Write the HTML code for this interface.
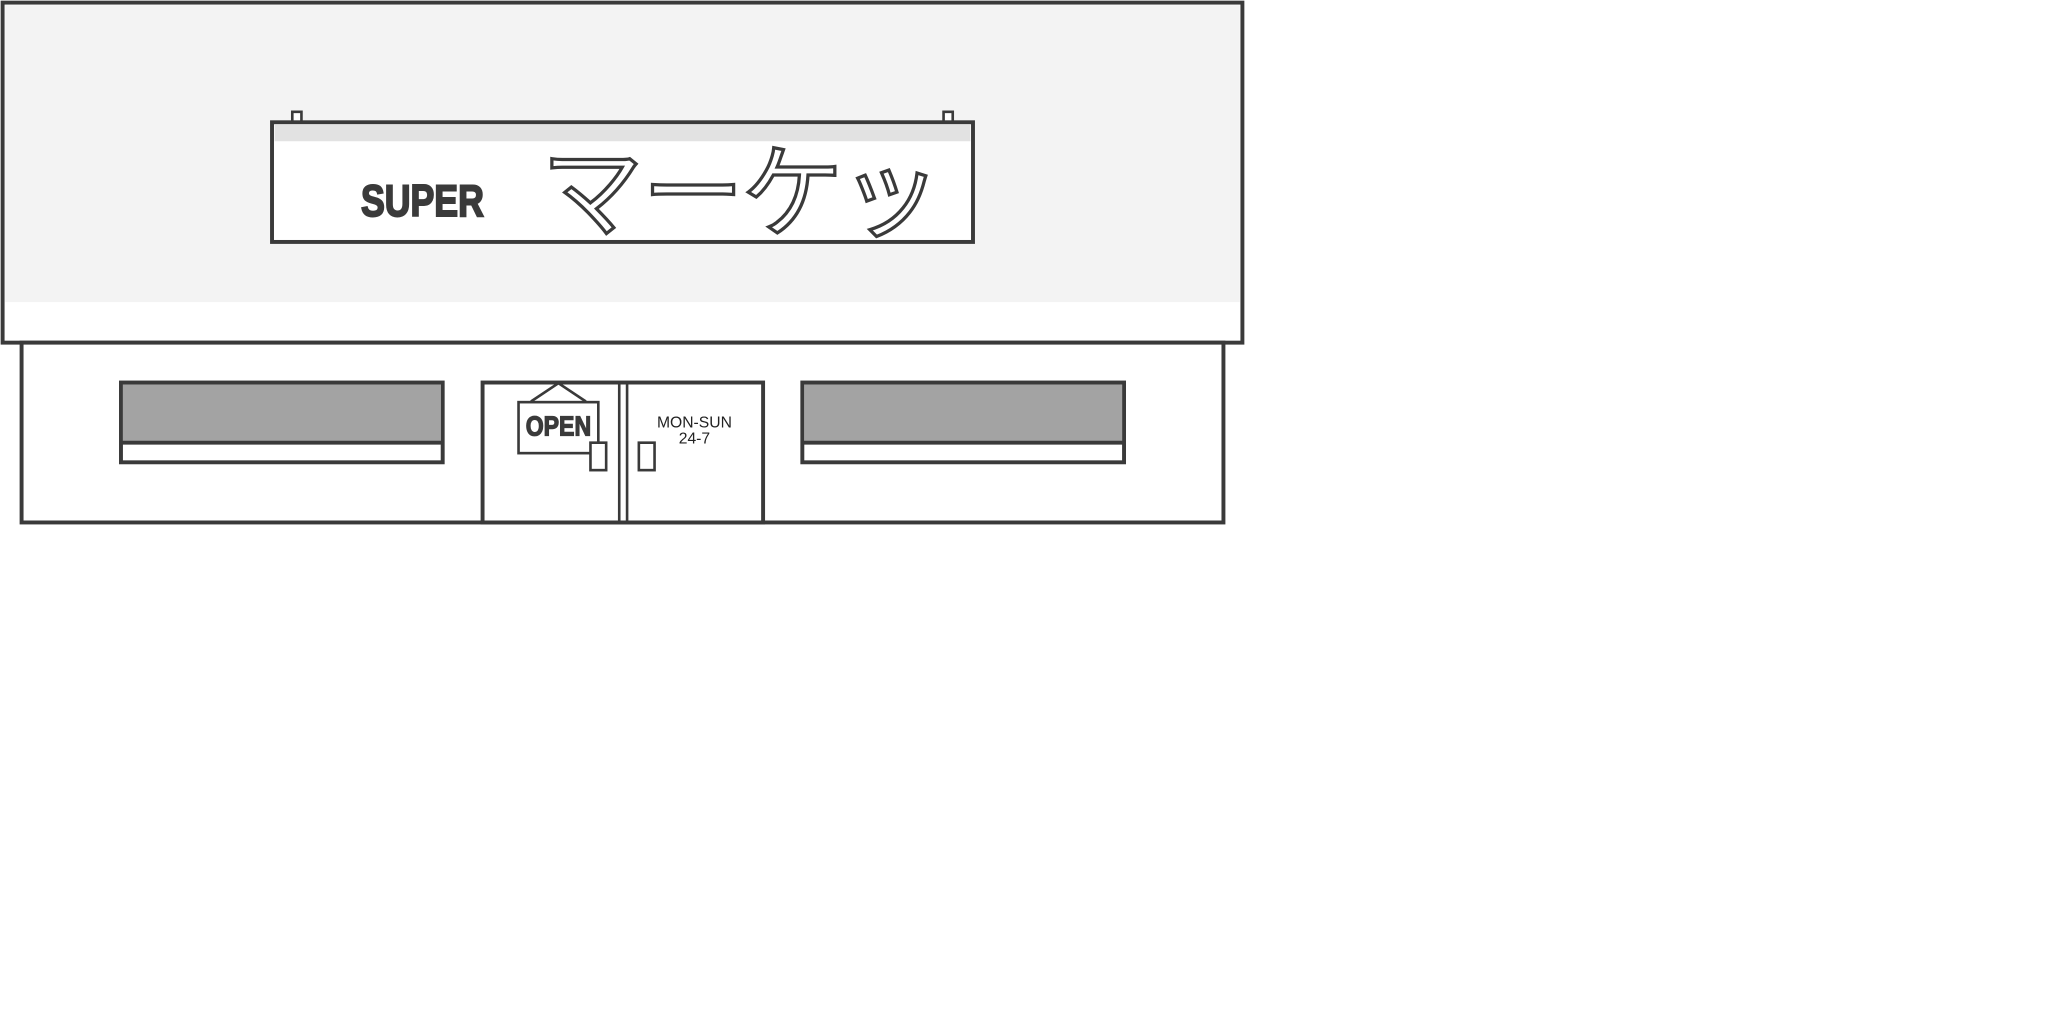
<!DOCTYPE html>
<html><head><meta charset="utf-8"><style>html,body{margin:0;padding:0;background:#fff}svg{display:block}</style></head>
<body>
<svg width="2048" height="1024" viewBox="0 0 1566 783" xmlns="http://www.w3.org/2000/svg">
<g stroke="#3a3a3a" stroke-width="3">
<rect x="2" y="2" width="948" height="260" fill="#fff"/>
<rect x="4" y="4" width="944" height="227" fill="#f3f3f3" stroke="none"/>
<rect x="223.5" y="85.5" width="7" height="8" fill="#fff" stroke-width="2"/>
<rect x="721.5" y="85.5" width="7" height="8" fill="#fff" stroke-width="2"/>
<rect x="208" y="93.5" width="536" height="91.5" fill="#fff"/>
<rect x="210" y="95" width="532" height="13" fill="#e2e2e2" stroke="none"/>
<rect x="16.5" y="262" width="919" height="137.5" fill="#fff"/>
<rect x="92.5" y="292.5" width="246" height="61" fill="#fff"/>
<rect x="94" y="294" width="243" height="44" fill="#a3a3a3" stroke="none"/>
<line x1="92.5" y1="338.5" x2="338.5" y2="338.5"/>
<rect x="613.5" y="292.5" width="246" height="61" fill="#fff"/>
<rect x="615" y="294" width="243" height="44" fill="#a3a3a3" stroke="none"/>
<line x1="613.5" y1="338.5" x2="859.5" y2="338.5"/>
<rect x="369" y="292.5" width="214.5" height="107" fill="#fff"/>
<line x1="473.5" y1="292" x2="473.5" y2="399" stroke-width="2"/>
<line x1="479.5" y1="292" x2="479.5" y2="399" stroke-width="2"/>
<polyline points="406,307 427,293 448,307" fill="none" stroke-width="2"/>
<rect x="396.5" y="307.5" width="61" height="39" fill="#fff" stroke-width="2"/>
<rect x="451.5" y="338.5" width="12" height="21" fill="#fff" stroke-width="2"/>
<rect x="488.5" y="338.5" width="12" height="21" fill="#fff" stroke-width="2"/>
</g>
<text x="276" y="165" textLength="94" lengthAdjust="spacingAndGlyphs" font-family="Liberation Sans, sans-serif" font-weight="bold" font-size="34" fill="#3a3a3a" stroke="#3a3a3a" stroke-width="1.5">SUPER</text>
<text x="402" y="333" textLength="50" lengthAdjust="spacingAndGlyphs" font-family="Liberation Sans, sans-serif" font-weight="bold" font-size="21" fill="#3a3a3a" stroke="#3a3a3a" stroke-width="1">OPEN</text>
<text x="531" y="327" text-anchor="middle" font-family="Liberation Sans, sans-serif" font-size="12" fill="#222">MON-SUN</text>
<text x="531" y="339" text-anchor="middle" font-family="Liberation Sans, sans-serif" font-size="12" fill="#222">24-7</text>
<g font-family="Liberation Sans, 'Noto Sans CJK JP', sans-serif" font-size="78" fill="#fff" stroke="#3a3a3a" stroke-width="2.5">
<text x="414" y="175">マ</text>
<text x="491" y="175">ー</text>
<text x="567" y="175">ケ</text>
<text x="642" y="175">ッ</text>
</g>
</svg>
</body></html>
